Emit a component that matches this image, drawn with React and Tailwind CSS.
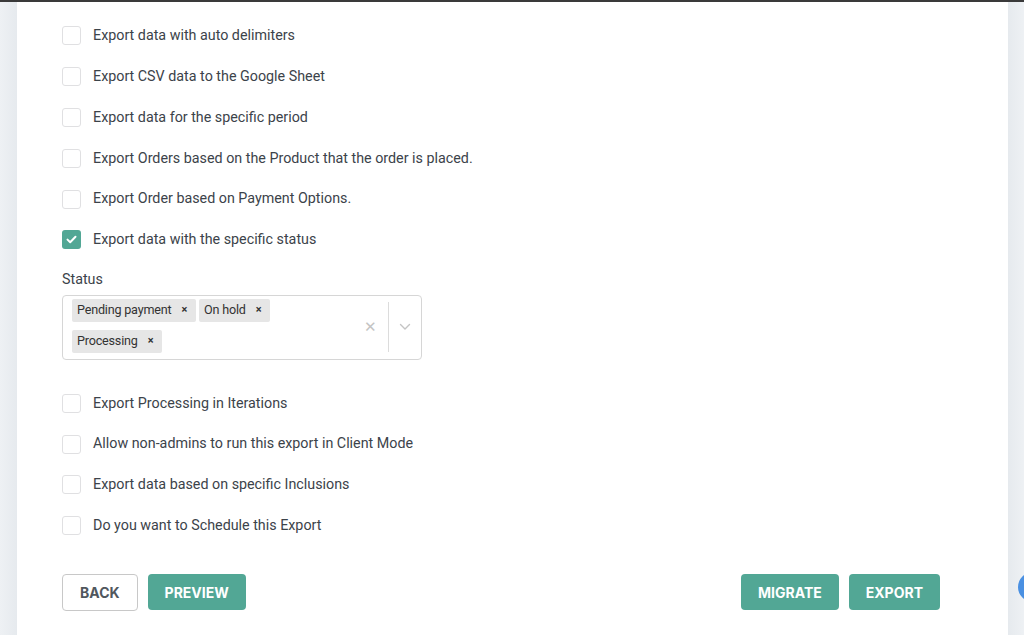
import React from "react";

const top = [
  { label: "Export data with auto delimiters" },
  { label: "Export CSV data to the Google Sheet" },
  { label: "Export data for the specific period" },
  { label: "Export Orders based on the Product that the order is placed." },
  { label: "Export Order based on Payment Options." },
  { label: "Export data with the specific status", checked: true },
];
const bottom = [
  "Export Processing in Iterations",
  "Allow non-admins to run this export in Client Mode",
  "Export data based on specific Inclusions",
  "Do you want to Schedule this Export",
];

function Row({ label, checked }) {
  return (
    <div className="flex h-[40.8px] items-center gap-[12px]">
      {checked ? (
        <span className="flex h-[19px] w-[19px] items-center justify-center rounded-[3px] bg-[#52a795]">
          <svg width="11" height="9" viewBox="0 0 11 9" fill="none">
            <path d="M1.5 4.6 L4.2 7.2 L9.5 1.8" stroke="white" strokeWidth="2" strokeLinecap="round" strokeLinejoin="round" />
          </svg>
        </span>
      ) : (
        <span className="h-[19px] w-[19px] rounded-[3px] border border-[#e0e0e2] bg-white" />
      )}
      <span className="text-[14.3px] text-[#3c434a]">{label}</span>
    </div>
  );
}

function Tag({ children }) {
  return (
    <span className="flex h-[23px] items-center gap-[10px] rounded-[2px] bg-[#e6e6e6] pl-[5px] pr-[9px] text-[12.6px] tracking-[-0.2px] text-[#333]">
      {children}
      <span className="text-[11px] font-bold text-[#333]">×</span>
    </span>
  );
}

function Btn({ children, outline }) {
  return (
    <button
      className={
        outline
          ? "h-[37px] rounded-[4px] border border-[#c8c8c8] bg-white px-[17px] text-[14px] font-bold text-[#50575e]"
          : "h-[36px] rounded-[4px] bg-[#52a795] px-[17px] text-[14px] font-bold text-white"
      }
      style={{ fontFamily: "Inter, 'Open Sans', sans-serif" }}
    >
      {children}
    </button>
  );
}

export default function App() {
  return (
    <div className="relative flex h-[635px] w-[1024px] flex-col overflow-hidden bg-white" style={{ fontFamily: "Roboto, 'Liberation Sans', sans-serif" }}>
      <div className="h-[2px] w-full bg-[#3a3a3a]" />
      <div className="flex flex-1">
        <div className="w-[17px] bg-gradient-to-r from-[#eef1f4] to-[#e6eaee]" />
        <div className="flex flex-1 flex-col bg-white pl-[45px] pr-[68px] pt-[13.6px]">
          {top.map((r) => (
            <Row key={r.label} {...r} />
          ))}
          <div className="mt-[9px] text-[14.3px] leading-[20px] text-[#3c434a]">Status</div>
          <div className="mt-[5.5px] flex h-[65px] w-[360px] rounded-[4px] border border-[#d6d6d6] bg-white">
            <div className="flex flex-1 flex-wrap content-start gap-x-[3px] gap-y-[4px] pl-[9px] pt-[3px]">
              <Tag>Pending payment</Tag>
              <Tag>On hold</Tag>
              <div className="basis-full" />
              <Tag>Processing</Tag>
            </div>
            <div className="flex items-center">
              <span className="w-[36px] text-center text-[15px] text-[#c4c4c4]">✕</span>
              <span className="h-[50px] w-px bg-[#dcdcdc]" />
              <span className="flex w-[32px] justify-center">
                <svg width="12" height="8" viewBox="0 0 12 8" fill="none">
                  <path d="M1.5 1.5 L6 6 L10.5 1.5" stroke="#c4c4c4" strokeWidth="1.4" strokeLinecap="round" strokeLinejoin="round" />
                </svg>
              </span>
            </div>
          </div>
          <div className="mt-[23px]">
            {bottom.map((l) => (
              <Row key={l} label={l} />
            ))}
          </div>
          <div className="mt-[28px] flex items-start justify-between">
            <div className="flex gap-[10px]">
              <Btn outline>BACK</Btn>
              <Btn>PREVIEW</Btn>
            </div>
            <div className="flex gap-[10px]">
              <Btn>MIGRATE</Btn>
              <Btn>EXPORT</Btn>
            </div>
          </div>
        </div>
        <div className="w-[16px] bg-gradient-to-r from-[#e6eaee] to-[#eef1f4]" />
      </div>
      <div className="absolute left-[1018px] top-[572px] h-[30px] w-[30px] rounded-full bg-[#4a90e2]" />
    </div>
  );
}
